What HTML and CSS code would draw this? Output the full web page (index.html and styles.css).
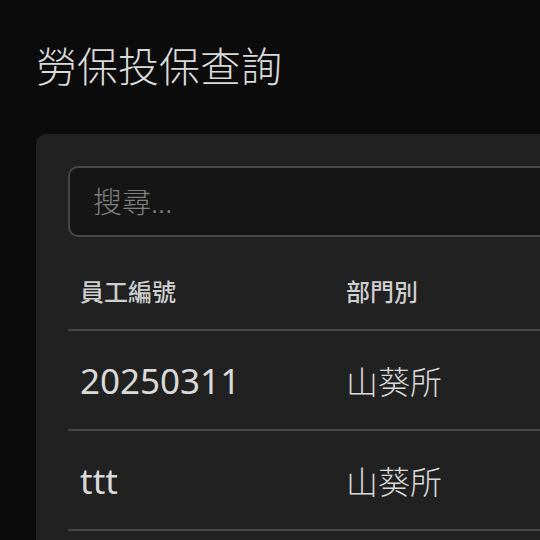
FILE: index.html
```html
<!DOCTYPE html>
<html lang="zh-Hant">
<head>
  <meta charset="UTF-8">
  <title>勞保投保查詢</title>
  <link rel="stylesheet" href="styles.css">
</head>
<body>
  <main class="page">
    <h1 class="page-title">勞保投保查詢</h1>

    <!-- 查詢卡片 -->
    <section class="card">
      <input type="text" class="search" placeholder="搜尋...">
      <table class="data-table">
        <thead>
          <tr>
            <th class="col-id">員工編號</th>
            <th class="col-dept">部門別</th>
            <th>姓名</th>
            <th>投保日期</th>
          </tr>
        </thead>
        <tbody>
          <tr>
            <td class="col-id">20250311</td>
            <td class="col-dept">山葵所</td>
            <td>王小明</td>
            <td>2025/03/11</td>
          </tr>
          <tr>
            <td class="col-id">ttt</td>
            <td class="col-dept">山葵所</td>
            <td>測試</td>
            <td>2025/03/12</td>
          </tr>
          <tr>
            <td class="col-id">test01</td>
            <td class="col-dept">山葵所</td>
            <td>測試二</td>
            <td>2025/03/13</td>
          </tr>
        </tbody>
      </table>
    </section>
  </main>
</body>
</html>
```

FILE: styles.css
```css
:root {
  --bg: #0b0b0b;
  --surface: #212121;
  --field: #151515;
  --line: #474747;
  --text: #dadada;
  --text-dim: #cfcfcf;
  --placeholder: #808080;
  --radius: 10px;
}
html, body {
  margin: 0;
  padding: 0;
  background: var(--bg);
  color: var(--text);
  font-family: "Noto Sans", "Noto Sans CJK TC", sans-serif;
  overflow: hidden;
}

/* ───────── レイアウト ───────── */
.page {
  padding: 42px 36px;
}
.page-title {
  margin: 0 0 44px;
  font-size: 41px;
  line-height: 48px;
  font-weight: 300;
  color: var(--text);
}

/* ───────── カード ───────── */
.card {
  width: 1100px;
  background: var(--surface);
  border-radius: var(--radius);
  padding: 32px;
}
.search {
  display: block;
  box-sizing: border-box;
  width: 100%;
  height: 71px;
  padding: 0 23px;
  background: var(--field);
  border: 2px solid var(--line);
  border-radius: var(--radius);
  color: var(--text);
  font: inherit;
  font-size: 29px;
  font-weight: 300;
  outline: none;
}
.search::placeholder { color: var(--placeholder); }

/* ───────── テーブル ───────── */
.data-table {
  width: 100%;
  margin-top: 14px;
  border-collapse: collapse;
  table-layout: fixed;
}
.data-table th,
.data-table td {
  text-align: left;
  border-bottom: 2px solid var(--line);
  padding: 0 12px;
}
.data-table th {
  height: 78px;
  font-size: 24px;
  font-weight: 500;
  color: var(--text-dim);
}
.data-table td {
  height: 98px;
  font-size: 32px;
  font-weight: 300;
  color: var(--text);
}
.data-table .col-id,
.data-table .col-dept { width: 242px; }
/* 員工編號は英数字のみなので少し大きめ */
.data-table td.col-id {
  font-size: 35px;
  font-weight: 400;
}
```
